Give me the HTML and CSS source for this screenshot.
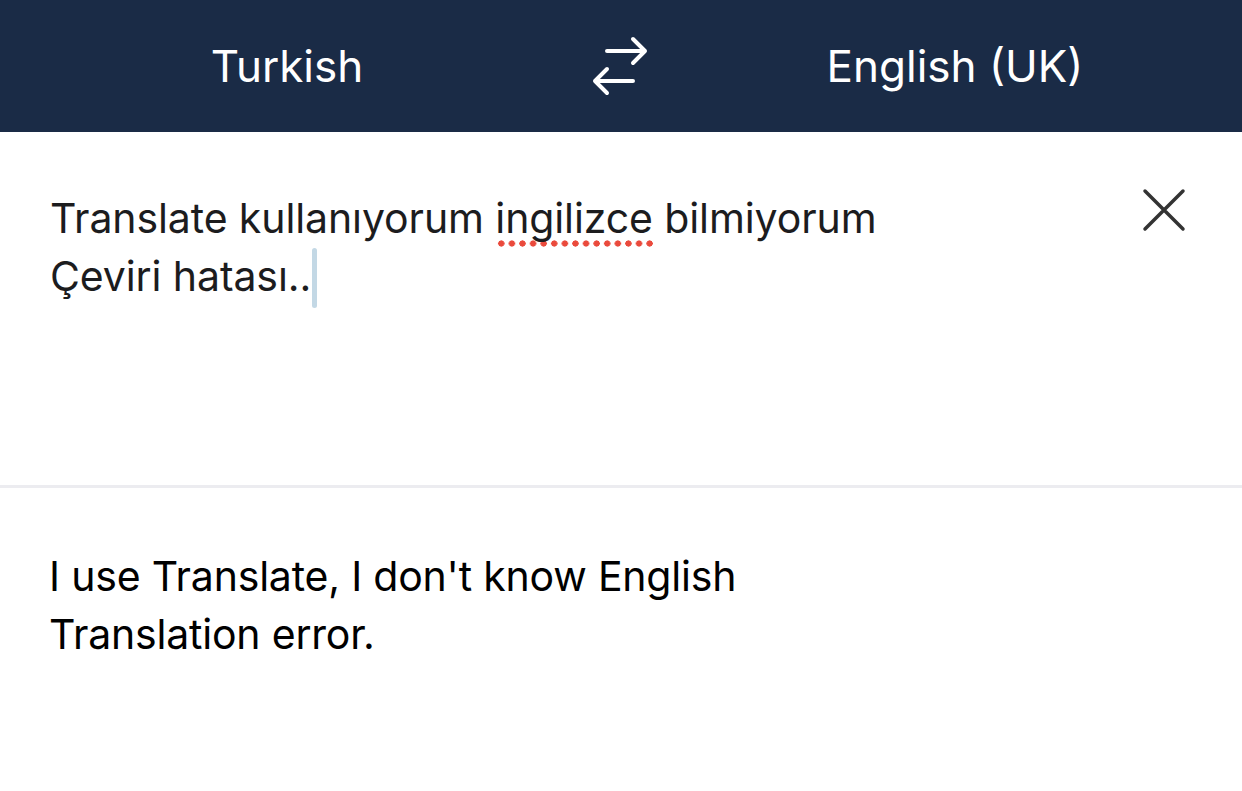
FILE: index.html
```html
<html>
<head>
    <meta charset="UTF-8">
    <meta name="viewport" content="width=device-width, initial-scale=1.0">
    <title>Translate</title>
    <link rel="stylesheet" href="styles.css">
</head>
<body>
<div class="header">
    <div class="lang">Turkish</div>
    <div class="swap">
        <svg width="62" height="64" viewBox="0 0 62 64" fill="none" stroke="#fff" stroke-width="4" stroke-linecap="round" stroke-linejoin="round">
            <path d="M17 17H55M43 5L55 17L43 29"/>
            <path d="M43 47H5M17 35L5 47L17 59"/>
        </svg>
    </div>
    <div class="lang">English (UK)</div>
</div>
<div class="source">
    <div class="text">Translate kullanıyorum <span class="typo">ingilizce</span> bilmiyorum<br>Çeviri hatası..<span class="caret"></span></div>
    <div class="clear">
        <svg width="44" height="44" viewBox="0 0 44 44" fill="none" stroke="#333" stroke-width="3.5" stroke-linecap="round">
            <path d="M3 3L41 41M41 3L3 41"/>
        </svg>
    </div>
</div>
<div class="result">
    <div class="text">I use Translate, I don't know English<br>Translation error.</div>
</div>
</body>
</html>
```

FILE: styles.css
```css
*{
    padding: 0;
    margin: 0;
}
body{
    font-family: Inter, "Noto Sans", sans-serif;
    background: #fff;
}
.header{
    height: 132px;
    background-color: #1a2b46;
    display: grid;
    grid-template-columns: 1fr 94px 1fr;
    align-items: center;
}
.lang{
    color: #fff;
    font-size: 44px;
    text-align: center;
}
.swap{
    display: flex;
    justify-content: center;
}
.swap svg{
    display: block;
}
.source{
    height: 356px;
    display: flex;
    justify-content: space-between;
    padding: 0 56px 0 50px;
    border-bottom: 3px solid #ececf0;
    box-sizing: border-box;
}
.text{
    font-size: 41px;
    line-height: 58px;
    color: #1c1c1e;
    letter-spacing: -0.1px;
}
.source .text{
    padding-top: 57px;
}
.result .text{
    padding-left: 49px;
    padding-top: 59px;
    color: #000;
    letter-spacing: -0.2px;
}
.typo{
    background-image: radial-gradient(circle, #ea4a3c 2.9px, transparent 3.3px);
    background-size: 10.6px 7px;
    background-repeat: repeat-x;
    background-position: 1px 100%;
    padding-bottom: 4px;
}
.caret{
    display: inline-block;
    width: 5px;
    height: 60px;
    margin-left: 1px;
    border-radius: 3px;
    background: #c3d8e5;
    vertical-align: -17px;
}
.clear{
    padding-top: 56px;
}
.clear svg{
    display: block;
}
```
